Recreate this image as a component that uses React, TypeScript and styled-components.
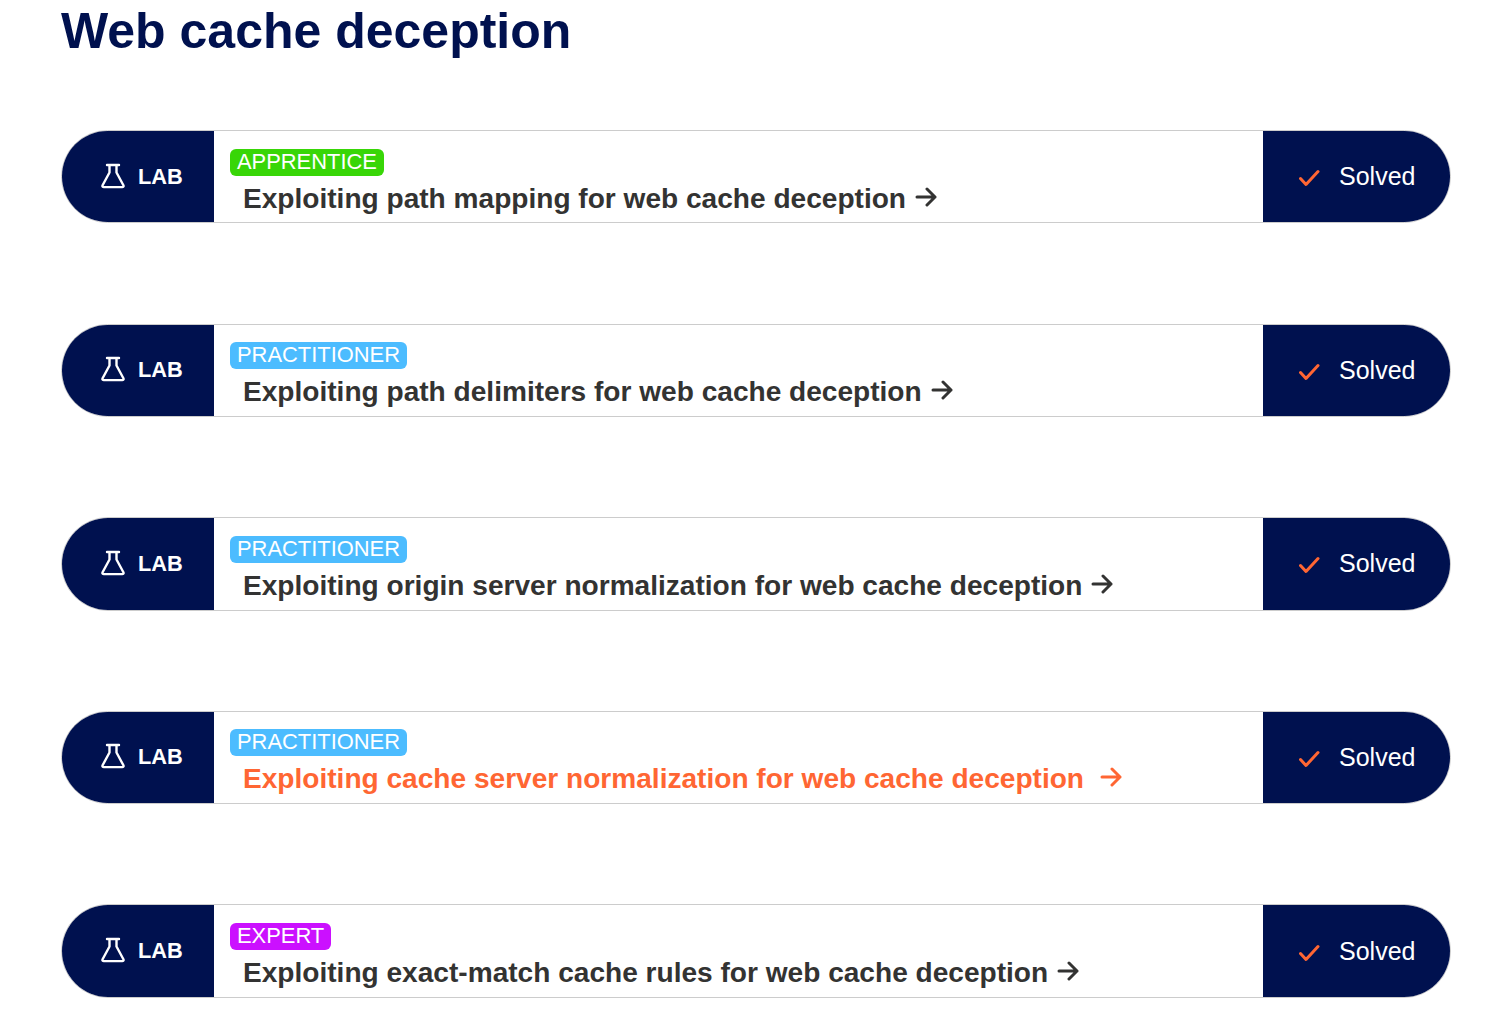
import { createGlobalStyle } from 'styled-components'
import styled from 'styled-components'

const GlobalStyle = createGlobalStyle`
  html, body {
    margin: 0;
    padding: 0;
    background: #fff;
    font-family: "Liberation Sans", Arial, sans-serif;
    overflow: hidden;
  }
`

const Page = styled.div`
  width: 1512px;
  height: 1010px;
  box-sizing: border-box;
  padding: 0 61px;
  overflow: hidden;
`

const Heading = styled.h1`
  margin: 0 0 71px;
  height: 59px;
  line-height: 63px;
  font-size: 50px;
  font-weight: 700;
  color: #00114f;
`

const LabList = styled.div`
  display: flex;
  flex-direction: column;
  gap: 100.2px;
`

const LabRow = styled.div`
  display: flex;
  align-items: stretch;
  box-sizing: border-box;
  height: 93.4px;
  border: 1px solid #ccc;
  border-radius: 47px;
  overflow: hidden;
`

const LabCap = styled.div`
  flex: 0 0 152px;
  box-sizing: border-box;
  display: flex;
  align-items: center;
  gap: 13px;
  padding-left: 39px;
  background: #00114f;
  color: #fff;
  font-size: 21.8px;
  font-weight: 700;
`

const FlaskIcon = styled.svg`
  width: 24px;
  height: 26px;
  margin-top: -2px;
`

const LabBody = styled.div`
  flex: 1;
  min-width: 0;
  box-sizing: border-box;
  padding: 17.6px 0 0 16px;
`

const LevelTag = styled.span<{ $bg: string }>`
  display: block;
  width: fit-content;
  height: 27px;
  line-height: 26px;
  padding: 0 7px;
  border-radius: 6px;
  background: ${(p) => p.$bg};
  color: #fff;
  font-size: 21.9px;
`

const LabLink = styled.a<{ $active?: boolean }>`
  display: flex;
  align-items: center;
  margin: 7px 0 0 13px;
  height: 32px;
  line-height: 32px;
  font-size: 28.08px;
  font-weight: 700;
  color: ${(p) => (p.$active ? '#ff6633' : '#333332')};
`

const ArrowIcon = styled.svg<{ $wide?: boolean }>`
  width: 22px;
  height: 22px;
  margin: -4px 0 0 ${(p) => (p.$wide ? '16px' : '9px')};
`

const SolvedCap = styled.div`
  flex: 0 0 187px;
  box-sizing: border-box;
  display: flex;
  align-items: center;
  gap: 18px;
  padding-left: 36px;
  background: #00114f;
  color: #fff;
  font-size: 25px;
`

const CheckIcon = styled.svg`
  width: 22px;
  height: 18px;
  margin-top: 3px;
`

const labs = [
  { level: 'APPRENTICE', color: '#38d607', title: 'Exploiting path mapping for web cache deception' },
  { level: 'PRACTITIONER', color: '#4cbcff', title: 'Exploiting path delimiters for web cache deception' },
  { level: 'PRACTITIONER', color: '#4cbcff', title: 'Exploiting origin server normalization for web cache deception' },
  { level: 'PRACTITIONER', color: '#4cbcff', title: 'Exploiting cache server normalization for web cache deception', active: true },
  { level: 'EXPERT', color: '#cb10ff', title: 'Exploiting exact-match cache rules for web cache deception' },
]

const Flask = () => (
  <FlaskIcon viewBox="0 0 24 26" fill="none" stroke="#fff" strokeWidth="2.4" strokeLinejoin="round" strokeLinecap="round">
    <path d="M6 2h12M8.500 2v7.500L1.600 22.300c-.5 1 .1 1.800 1.200 1.800h18.400c1.100 0 1.700-.8 1.200-1.800L15.500 9.500V2" />
  </FlaskIcon>
)

const Check = () => (
  <CheckIcon viewBox="0 0 22 18" fill="none" stroke="#ff6633" strokeWidth="3" strokeLinecap="round" strokeLinejoin="round">
    <path d="M1.500 9.500l5.500 6L19 2.500" />
  </CheckIcon>
)

const App = () => {
  return (
    <Page>
      <GlobalStyle />
      <Heading>Web cache deception</Heading>
      <LabList>
        {labs.map((lab) => (
          <LabRow key={lab.title}>
            <LabCap>
              <Flask />
              LAB
            </LabCap>
            <LabBody>
              <LevelTag $bg={lab.color}>{lab.level}</LevelTag>
              <LabLink $active={lab.active}>
                {lab.title}
                <ArrowIcon $wide={lab.active} viewBox="0 0 22 22" fill="none" stroke="currentColor" strokeWidth="3" strokeLinecap="round" strokeLinejoin="round">
                  <path d="M2 11h18M12 3l8 8-8 8" />
                </ArrowIcon>
              </LabLink>
            </LabBody>
            <SolvedCap>
              <Check />
              Solved
            </SolvedCap>
          </LabRow>
        ))}
      </LabList>
    </Page>
  )
}

export default App
